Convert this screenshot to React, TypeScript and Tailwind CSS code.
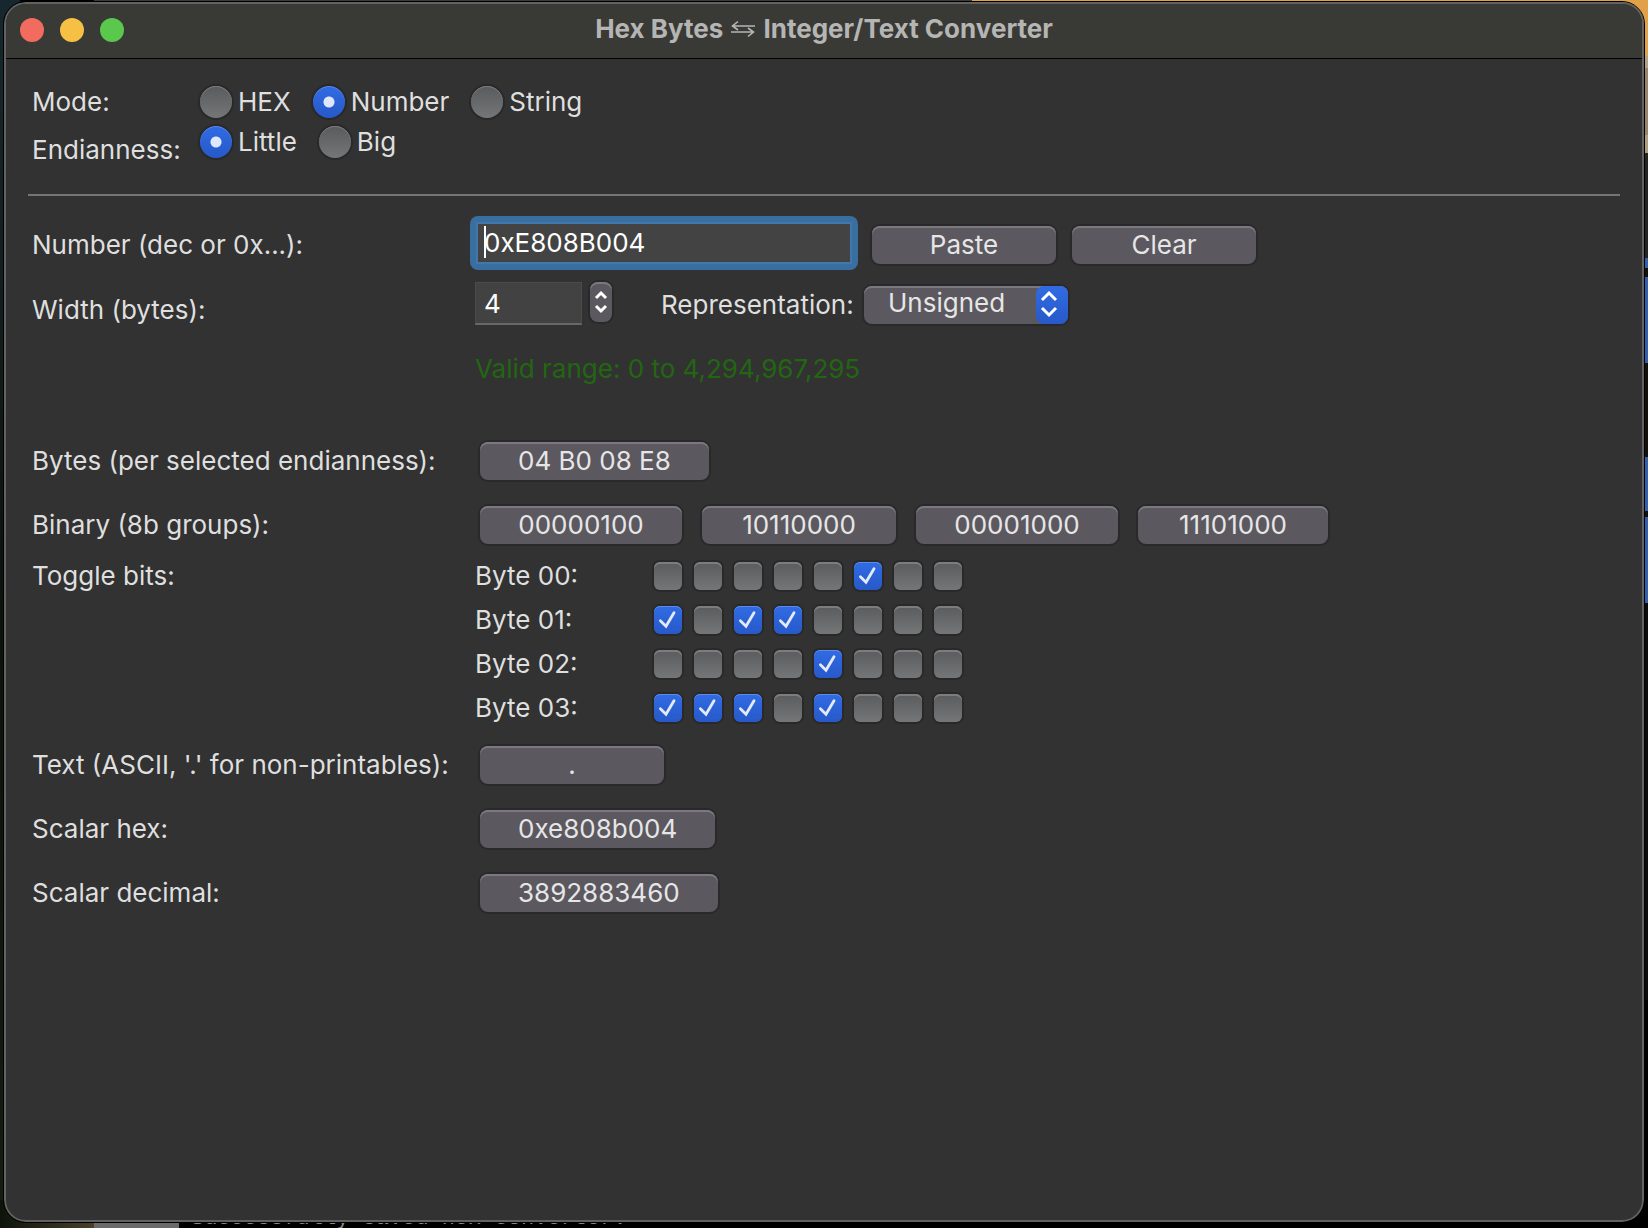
import { useState, type ReactNode } from "react";

const raised =
  "bg-[#5b585f] shadow-[inset_0_2px_0_#7b797f,0_0_0_2px_#292929] text-[#e6e6e6]";

function PushButton({ children }: { children: ReactNode }) {
  return (
    <button
      type="button"
      className={`h-[38px] min-w-[184px] rounded-lg px-[38px] text-center whitespace-nowrap ${raised}`}
    >
      {children}
    </button>
  );
}

function Radio({ name, label, defaultChecked }: { name: string; label: string; defaultChecked?: boolean }) {
  return (
    <label className="flex h-10 items-center gap-[6px]">
      <input
        type="radio"
        name={name}
        defaultChecked={defaultChecked}
        className="size-8 appearance-none rounded-full bg-linear-to-b from-[#5a5b5d] to-[#757678] shadow-[inset_0_1px_0_#7d7d7f,0_0_0_2px_#292929] checked:bg-[radial-gradient(circle,#dfe7fa_0_5px,transparent_6px),linear-gradient(#316be4,#2759c8)] checked:shadow-[inset_0_1px_0_#5d8bea,0_0_0_2px_#292929]"
      />
      {label}
    </label>
  );
}

function Bit({ label, initial }: { label: string; initial: boolean }) {
  const [on, setOn] = useState(initial);
  return (
    <span className="relative size-7">
      <input
        type="checkbox"
        aria-label={label}
        checked={on}
        onChange={() => setOn(!on)}
        className="block size-7 appearance-none rounded-md bg-linear-to-b from-[#5a5b5d] to-[#757678] shadow-[inset_0_2px_0_#7d7d7f,0_0_0_2px_#292929] checked:from-[#316be4] checked:to-[#2759c8] checked:shadow-[inset_0_1px_0_#5d8bea,0_0_0_2px_#292929]"
      />
      {on && (
        <svg viewBox="0 0 28 28" className="pointer-events-none absolute inset-0 size-7" fill="none" stroke="#e3eafa" strokeWidth="2.8">
          <path d="M6.4 14.8 L12 20.2 L20 6.8" strokeLinecap="round" strokeLinejoin="miter" />
        </svg>
      )}
    </span>
  );
}

const groups = ["00000100", "10110000", "00001000", "11101000"];

const label = "w-[443px] shrink-0";

export default function App() {
  return (
    <div className="relative flex min-h-screen overflow-hidden bg-black px-1 pt-[2px] pb-[6px] font-['Inter',sans-serif] text-[26px] leading-8 text-[#dfdfdf]">
      {/* Desktop and other windows behind */}
      <div className="absolute inset-y-0 left-0 w-5 bg-linear-to-b from-[#16282e] via-[#0c120c] to-[#161c0f]" />
      <div className="absolute top-0 right-0 left-[94px] h-8 bg-linear-to-r from-[#3a3d3b] from-[878px] to-[#e2a048] to-[878px]" />
      <div className="absolute inset-y-0 right-0 w-6 bg-[linear-gradient(#e2a048_0_56px,#b3a187_56px_68px,#96836a_68px_135px,#b09b7c_135px_153px,#242424_153px_258px,#325fae_258px_268px,#14110d_268px_277px,#325fae_277px_363px,#14110d_363px_457px,#325fae_457px_511px,#14110d_511px_517px,#325fae_517px_603px,#0c0b0a_603px_1000px,#000_1000px)]" />
      <div className="absolute bottom-0 left-0 flex h-7 w-full whitespace-pre bg-black">
        <div className="h-7 w-[94px] bg-linear-to-r from-[#0d140a] to-[#4b402b]" />
        <div className="h-7 w-[85px] bg-[#6a6a6a]" />
        <div className="h-7 pl-3 font-['Liberation_Mono',monospace] text-[22px] leading-[38px] text-[#8a8a8a]">
          Successfully saved hex converter.
        </div>
      </div>

      <main className="relative flex grow flex-col overflow-hidden rounded-[22px] border-2 border-[#626262] bg-[#323232] outline outline-black">
        <header className="flex h-[55px] shrink-0 items-center border-b border-black bg-[#393936] px-[14px] pb-[2px]">
          <div className="flex gap-4">
            <button type="button" aria-label="Close" className="size-6 rounded-full bg-[#f16c5f]" />
            <button type="button" aria-label="Minimize" className="size-6 rounded-full bg-[#f6c045]" />
            <button type="button" aria-label="Zoom" className="size-6 rounded-full bg-[#59c84c]" />
          </div>
          <h1 className="flex grow items-center justify-center gap-2 pr-[104px] pb-[2px] font-bold text-[#b5b5b4]">
            Hex Bytes
            <svg viewBox="0 0 24 18" className="h-[18px] w-6" fill="none" stroke="#b5b5b4" strokeWidth="1.6">
              <path d="M24 6H1.5M7 1.5L1.5 6L7 10M0 12H22.5M17 8L22.5 12L17 16.5" />
            </svg>
            Integer/Text Converter
          </h1>
        </header>

        <form className="flex flex-col px-[22px] pt-[23px]" onSubmit={(e) => e.preventDefault()}>
          <div className="flex h-10 items-center px-1" role="radiogroup" aria-label="Mode">
            <span className="w-[168px]">Mode:</span>
            <div className="flex gap-[22px]">
              <Radio name="mode" label="HEX" />
              <Radio name="mode" label="Number" defaultChecked />
              <Radio name="mode" label="String" />
            </div>
          </div>
          <div className="flex h-12 px-1" role="radiogroup" aria-label="Endianness">
            <span className="w-[168px] pt-3">Endianness:</span>
            <div className="flex gap-[22px]">
              <Radio name="endian" label="Little" defaultChecked />
              <Radio name="endian" label="Big" />
            </div>
          </div>
          <hr className="mt-6 border-t-2 border-[#747675]" />

          <div className="mt-5 flex h-[54px] items-center pl-1">
            <label htmlFor="number" className={`${label} pt-[3px]`}>Number (dec or 0x...):</label>
            <div className="relative ml-[-5px] w-[388px] rounded-lg bg-[#3a6e9f] p-[6px]">
              <input
                id="number"
                defaultValue="0xE808B004"
                className="block h-[42px] w-full border-2 border-[#3f78ad] bg-[#434343] pb-[2px] pl-[6px] text-white outline-none"
              />
              <span className="absolute top-[10px] left-[14px] h-8 w-[2px] bg-white" />
            </div>
            <div className="ml-[14px] flex gap-4 pt-1">
              <PushButton>Paste</PushButton>
              <PushButton>Clear</PushButton>
            </div>
          </div>

          <div className="mt-3 flex h-11 pl-1">
            <label htmlFor="width" className={`${label} pt-3`}>Width (bytes):</label>
            <input
              id="width"
              defaultValue="4"
              className="h-[43px] w-[107px] border border-b-2 border-[#4b4b4b] border-b-[#686868] bg-[#424242] pl-2 text-white outline-none"
            />
            <button type="button" aria-label="Change width" className={`ml-2 flex h-10 w-[22px] items-center justify-center rounded-lg ${raised}`}>
              <svg viewBox="0 0 22 40" className="h-10 w-[22px]" fill="none" stroke="#fff" strokeWidth="3">
                <path d="M6 16L11 11L16 16M6 24L11 29L16 24" />
              </svg>
            </button>
            <label htmlFor="repr" className="ml-[49px] w-[203px] pt-[7px]">Representation:</label>
            <div className="relative mt-1 h-[38px] w-[204px]">
              <select id="repr" className={`block h-[38px] w-full appearance-none rounded-lg pb-1 pl-6 ${raised}`}>
                <option>Unsigned</option>
                <option>Signed</option>
              </select>
              <svg viewBox="0 0 32 38" className="pointer-events-none absolute top-0 right-0 h-[38px] w-8 rounded-lg bg-linear-to-b from-[#316be4] to-[#2759c8]" fill="none" stroke="#fff" strokeWidth="3">
                <path d="M6 14L13 7L20 14M6 22L13 29L20 22" />
              </svg>
            </div>
          </div>

          <output className="mt-[27px] pl-[447px] text-[#236612]">Valid range: 0 to 4,294,967,295</output>

          <div className="mt-[57px] flex items-center pl-1">
            <span className={label}>Bytes (per selected endianness):</span>
            <div className="pl-[5px]"><PushButton>04 B0 08 E8</PushButton></div>
          </div>
          <div className="mt-[26px] flex items-center pl-1">
            <span className={label}>Binary (8b groups):</span>
            <div className="grid grid-cols-[202px_194px_202px_190px] gap-5 pl-[5px]">
              {groups.map((g) => <PushButton key={g}>{g}</PushButton>)}
            </div>
          </div>
          <div className="mt-[10px] flex pl-1">
            <span className={`${label} pt-[6px]`}>Toggle bits:</span>
            <div className="flex flex-col">
              {groups.map((g, i) => (
                <div key={g} className="flex h-11 items-center" role="group" aria-label={`Byte 0${i}`}>
                  <span className="w-[179px]">{`Byte 0${i}:`}</span>
                  <div className="flex gap-3">
                    {g.split("").map((b, j) => (
                      <Bit key={j} label={`Byte 0${i} bit ${7 - j}`} initial={b === "1"} />
                    ))}
                  </div>
                </div>
              ))}
            </div>
          </div>
          <div className="mt-4 flex items-center pl-1">
            <span className={label}>Text (ASCII, '.' for non-printables):</span>
            <div className="pl-[5px]"><PushButton>.</PushButton></div>
          </div>
          <div className="mt-[26px] flex items-center pl-1">
            <span className={label}>Scalar hex:</span>
            <div className="pl-[5px]"><PushButton>0xe808b004</PushButton></div>
          </div>
          <div className="mt-[26px] flex items-center pl-1">
            <span className={label}>Scalar decimal:</span>
            <div className="pl-[5px]"><PushButton>3892883460</PushButton></div>
          </div>
        </form>
      </main>
    </div>
  );
}
